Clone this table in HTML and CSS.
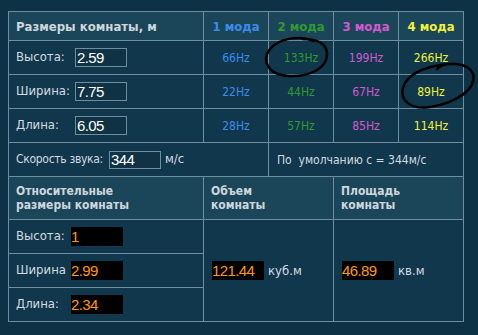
FILE: index.html
```html
<!DOCTYPE html>
<html lang="ru">
<head>
<meta charset="utf-8">
<title>Размеры комнаты</title>
<link rel="stylesheet" href="styles.css">
</head>
<body>
<div class="page">
<table class="calc">
  <colgroup>
    <col class="c0"><col class="cm"><col class="cm"><col class="cm"><col class="cm">
  </colgroup>
  <tr class="head">
    <th class="lt">Размеры комнаты, м</th>
    <th class="m1">1 мода</th>
    <th class="m2">2 мода</th>
    <th class="m3">3 мода</th>
    <th class="m4">4 мода</th>
  </tr>
  <tr class="row">
    <td class="lbl"><span class="name">Высота:</span><input class="inp" value="2.59"></td>
    <td class="v m1">66Hz</td><td class="v m2">133Hz</td><td class="v m3">199Hz</td><td class="v m4">266Hz</td>
  </tr>
  <tr class="row">
    <td class="lbl"><span class="name">Ширина:</span><input class="inp" value="7.75"></td>
    <td class="v m1">22Hz</td><td class="v m2">44Hz</td><td class="v m3">67Hz</td><td class="v m4">89Hz</td>
  </tr>
  <tr class="row">
    <td class="lbl"><span class="name">Длина:</span><input class="inp" value="6.05"></td>
    <td class="v m1">28Hz</td><td class="v m2">57Hz</td><td class="v m3">85Hz</td><td class="v m4">114Hz</td>
  </tr>
  <tr class="row">
    <td class="lbl" colspan="2"><span class="spd">Скорость звука:</span><input class="inp sp" value="344"><span class="unit">м/с</span></td>
    <td class="def" colspan="3">По&nbsp; умолчанию с = 344м/с</td>
  </tr>
  <tr class="head2">
    <th class="lt">Относительные<br>размеры комнаты</th>
    <th class="lt" colspan="2">Объем<br>комнаты</th>
    <th class="lt" colspan="2">Площадь<br>комнаты</th>
  </tr>
  <tr class="row">
    <td class="lbl"><span class="name2">Высота:</span><output class="out">1</output></td>
    <td class="res" colspan="2" rowspan="3"><output class="out">121.44</output><span class="unit2">куб.м</span></td>
    <td class="res" colspan="2" rowspan="3"><output class="out">46.89</output><span class="unit2">кв.м</span></td>
  </tr>
  <tr class="row">
    <td class="lbl"><span class="name2">Ширина</span><output class="out">2.99</output></td>
  </tr>
  <tr class="row">
    <td class="lbl"><span class="name2">Длина:</span><output class="out">2.34</output></td>
  </tr>
</table>
<svg class="marks" width="478" height="335" viewBox="0 0 478 335">
  <path d="M314 41 C300 35, 279 38, 270 49 C262 59, 266 75, 289 76 C310 77, 328 68, 327 53 C326 43, 318 39, 303 39" />
  <path d="M437 69 C444 62, 468 61, 473 74 C477 89, 456 103, 430 107 C410 110, 400 100, 403 88 C406 76, 421 67, 447 64" />
</svg>
</div>
</body>
</html>
```
FILE: styles.css
```css
html, body {
  margin: 0;
  padding: 0;
  background: #0d3245;
}
.page {
  position: relative;
  width: 478px;
  height: 335px;
  padding: 11px 0 0 8px;
  box-sizing: border-box;
  font-family: "DejaVu Sans Condensed", "DejaVu Sans", sans-serif;
  font-size: 12px;
  color: #d3dbe0;
}
.calc {
  border-collapse: collapse;
  table-layout: fixed;
  width: 456px;
  background: #10374b;
}
.c0 { width: 195px; }
.cm { width: 65px; }
.calc th, .calc td {
  border: 1px solid #6e8e9d;
  padding: 0;
}
.head th {
  height: 28px;
  background: #1b4659;
  font-weight: bold;
  font-size: 13px;
  text-align: center;
}
.head th.lt, .head2 th.lt {
  text-align: left;
  padding-left: 7px;
  color: #cdd7dd;
}
.head2 th {
  height: 42px;
  background: #1b4659;
  font-weight: bold;
  font-size: 12px;
  line-height: 14px;
}
.row td { height: 33px; }
.m1 { color: #3b8deb; }
.m2 { color: #2f9a2f; }
.m3 { color: #d35ad0; }
.m4 { color: #f2f23a; }
.v { text-align: center; }
.lbl {
  padding-left: 7px !important;
  white-space: nowrap;
  font-size: 13px;
}
.name { display: inline-block; width: 59px; }
.name2 { display: inline-block; width: 55px; }
.spd {
  display: inline-block;
  width: 93px;
  font-size: 12px;
  letter-spacing: -0.3px;
}
.inp {
  width: 52px;
  height: 19px;
  box-sizing: border-box;
  border: 1px solid #6e8e9d;
  background: #0f3345;
  color: #ffffff;
  font-family: "Liberation Sans", Arial, sans-serif;
  font-size: 15px;
  padding: 0 1px;
  vertical-align: middle;
  letter-spacing: -0.6px;
}
.sp { height: 18px; }
.unit { margin-left: 4px; }
.def { padding-left: 8px !important; }
.out {
  display: inline-block;
  width: 52px;
  height: 19px;
  line-height: 19px;
  background: #000;
  color: #ff9a00;
  font-family: "Liberation Sans", Arial, sans-serif;
  font-size: 15px;
  letter-spacing: -0.6px;
  vertical-align: middle;
}
.res { padding-left: 8px !important; font-size: 13px; }
.unit2 { margin-left: 4px; vertical-align: middle; }
.marks {
  position: absolute;
  left: 0;
  top: 0;
  pointer-events: none;
}
.marks path {
  fill: none;
  stroke: #000;
  stroke-width: 2.5;
  stroke-linecap: round;
}
```
